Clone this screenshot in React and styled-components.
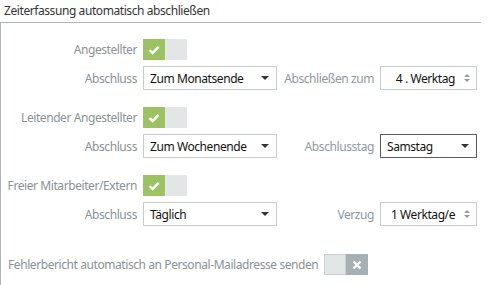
import React from "react";
import styled, { createGlobalStyle } from "styled-components";

const Global = createGlobalStyle`
  html, body { margin: 0; padding: 0; background: #fff; }
  body { font-family: "Noto Sans", "Open Sans", sans-serif; font-size: 12px; letter-spacing: -0.42px; }
`;

const Page = styled.div`
  width: 490px;
  height: 285px;
  background: #fff;
  overflow: hidden;
`;

const Title = styled.div`
  height: 22px;
  padding-left: 4px;
  line-height: 22px;
  color: #333;
  font-size: 12px;
`;

const Section = styled.div`
  width: 480px;
  border-top: 1px solid #aeb4b7;
  border-left: 1px solid #aeb4b7;
  padding-top: 16px;
  height: 262px;
  display: flex;
  flex-direction: column;
  gap: 17px;
`;

const Group = styled.div`
  display: grid;
  grid-template-columns: 136px 134px 91px 97px;
  column-gap: 6px;
  row-gap: 6px;
  align-items: center;
`;

const Label = styled.div`
  text-align: right;
  color: ${(p) => (p.$blue ? "#8c9aa5" : "#8a9196")};
  white-space: nowrap;
`;

const Toggle = styled.div`
  display: flex;
  width: 44px;
  height: 21px;
`;

const Half = styled.div`
  width: 22px;
  height: 21px;
  background: ${(p) => p.$bg};
  display: flex;
  align-items: center;
  justify-content: center;
  box-sizing: border-box;
  border: ${(p) => (p.$border ? `1px solid ${p.$border}` : "none")};
`;

const ToggleCell = styled.div`
  grid-column: 2 / 5;
`;

const Select = styled.div`
  box-sizing: border-box;
  height: 24px;
  border: 1px solid ${(p) => (p.$dark ? "#5c5c5c" : "#c6cbce")};
  display: flex;
  align-items: center;
  justify-content: space-between;
  padding: 0 7px 0 6px;
  color: #111;
`;

const Caret = styled.span`
  width: 0;
  height: 0;
  border-left: 4px solid transparent;
  border-right: 4px solid transparent;
  border-top: 4px solid #333;
`;

const NumberBox = styled.div`
  box-sizing: border-box;
  height: 24px;
  border: 1px solid #c6cbce;
  display: flex;
  align-items: center;
  justify-content: flex-end;
  gap: 9px;
  padding-right: 6px;
  color: #111;
`;

const Spin = styled.span`
  display: flex;
  flex-direction: column;
  gap: 2px;
`;

const Up = styled.span`
  width: 0;
  height: 0;
  border-left: 3px solid transparent;
  border-right: 3px solid transparent;
  border-bottom: 3px solid #999;
`;

const Down = styled(Up)`
  border-bottom: none;
  border-top: 3px solid #999;
`;

const Footer = styled.div`
  display: flex;
  align-items: center;
  gap: 6px;
  padding-left: 7px;
  margin-top: 11px;
`;

const Check = () => (
  <svg width="12" height="10" viewBox="0 0 12 10">
    <path d="M1.5 5.2 L4.6 8 L10.5 1.8" fill="none" stroke="#fff" strokeWidth="2.4" />
  </svg>
);

const Cross = () => (
  <svg width="10" height="10" viewBox="0 0 10 10">
    <path d="M1.5 1.5 L8.5 8.5 M8.5 1.5 L1.5 8.5" stroke="#fff" strokeWidth="2.4" />
  </svg>
);

const OnToggle = () => (
  <Toggle>
    <Half $bg="#9dc264"><Check /></Half>
    <Half $bg="#e2e6e6" />
  </Toggle>
);

const OffToggle = () => (
  <Toggle>
    <Half $bg="#e2e6e6" $border="#c9cfd1" />
    <Half $bg="#a7b0b3"><Cross /></Half>
  </Toggle>
);

const SelectBox = ({ value, dark }) => (
  <Select $dark={dark}>
    <span>{value}</span>
    <Caret />
  </Select>
);

const Num = ({ value }) => (
  <NumberBox>
    <span>{value}</span>
    <Spin><Up /><Down /></Spin>
  </NumberBox>
);

const groups = [
  { name: "Angestellter", sel: "Zum Monatsende", label2: "Abschließen zum", kind: "num", val: "4 . Werktag" },
  { name: "Leitender Angestellter", sel: "Zum Wochenende", label2: "Abschlusstag", kind: "sel", val: "Samstag" },
  { name: "Freier Mitarbeiter/Extern", sel: "Täglich", label2: "Verzug", kind: "num", val: "1 Werktag/e" },
];

export default function App() {
  return (
    <Page>
      <Global />
      <Title>Zeiterfassung automatisch abschließen</Title>
      <Section>
        {groups.map((g) => (
          <Group key={g.name}>
            <Label>{g.name}</Label>
            <ToggleCell><OnToggle /></ToggleCell>
            <Label>Abschluss</Label>
            <SelectBox value={g.sel} />
            <Label $blue>{g.label2}</Label>
            {g.kind === "num" ? <Num value={g.val} /> : <SelectBox value={g.val} dark />}
          </Group>
        ))}
        <Footer>
          <Label>Fehlerbericht automatisch an Personal-Mailadresse senden</Label>
          <OffToggle />
        </Footer>
      </Section>
    </Page>
  );
}
